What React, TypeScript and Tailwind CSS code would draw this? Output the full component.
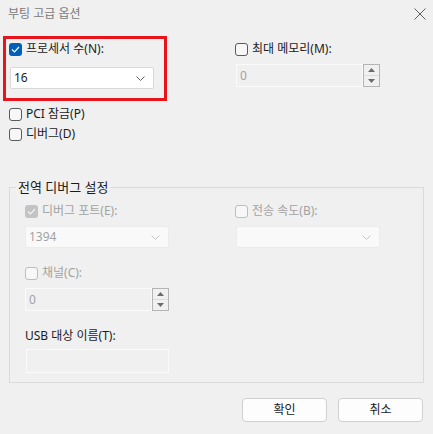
import React from 'react';

type CheckProps = { checked?: boolean; disabled?: boolean };

function CheckBox({ checked, disabled }: CheckProps) {
  if (checked && disabled) {
    return (
      <span className="flex h-[13px] w-[13px] shrink-0 items-center justify-center rounded-[3px] bg-[#c3c3c3]">
        <svg width="9" height="7" viewBox="0 0 9 7" fill="none">
          <path d="M1 3.5 L3.5 6 L8 1" stroke="#f4f4f4" strokeWidth="1.2" />
        </svg>
      </span>
    );
  }
  if (checked) {
    return (
      <span className="flex h-[13px] w-[13px] shrink-0 items-center justify-center rounded-[3px] bg-[#005fb8]">
        <svg width="9" height="7" viewBox="0 0 9 7" fill="none">
          <path d="M1 3.5 L3.5 6 L8 1" stroke="#ffffff" strokeWidth="1.2" />
        </svg>
      </span>
    );
  }
  return (
    <span
      className={
        disabled
          ? 'h-[13px] w-[13px] shrink-0 rounded-[3px] border border-[#bdbdbd] bg-[#f7f7f7]'
          : 'h-[13px] w-[13px] shrink-0 rounded-[3px] border border-[#5a5a5a] bg-[#f7f7f7]'
      }
    />
  );
}

function CheckRow({ label, checked, disabled }: CheckProps & { label: string }) {
  return (
    <div className="flex h-[16px] items-center gap-[4px]">
      <CheckBox checked={checked} disabled={disabled} />
      <span className={disabled ? 'text-[#a2a2a2]' : 'text-[#1b1b1b]'}>{label}</span>
    </div>
  );
}

function Chevron({ color }: { color: string }) {
  return (
    <svg width="9" height="5" viewBox="0 0 9 5" fill="none">
      <path d="M0.5 0.5 L4.5 4.5 L8.5 0.5" stroke={color} strokeWidth="1" />
    </svg>
  );
}

function Select({ value, disabled }: { value: string; disabled?: boolean }) {
  return (
    <div
      className={
        disabled
          ? 'flex h-[22px] w-[144px] items-center justify-between rounded-[2px] border border-[#ececec] bg-[#f9f9f9] pl-[3px] pr-[8px] text-[#a2a2a2]'
          : 'flex h-[22px] w-[144px] items-center justify-between rounded-[2px] border border-[#d9d9d9] bg-white pl-[3px] pr-[8px] text-[#1b1b1b]'
      }
    >
      <span>{value}</span>
      <Chevron color={disabled ? '#c4c4c4' : '#606060'} />
    </div>
  );
}

function SpinBox({ value }: { value: string }) {
  return (
    <div className="flex h-[23px] w-[144px] items-stretch">
      <div className="flex flex-1 items-center border border-[#fafafa] bg-[#f0f0f0] pl-[3px] text-[#a2a2a2]">
        {value}
      </div>
      <div className="flex w-[17px] flex-col border border-[#b4b4b4] bg-[#f0f0f0]">
        <div className="flex flex-1 items-center justify-center border-b border-[#dcdcdc]">
          <svg width="7" height="4" viewBox="0 0 7 4">
            <path d="M0 4 L3.5 0 L7 4 Z" fill="#6b6b6b" />
          </svg>
        </div>
        <div className="flex flex-1 items-center justify-center">
          <svg width="7" height="4" viewBox="0 0 7 4">
            <path d="M0 0 L3.5 4 L7 0 Z" fill="#6b6b6b" />
          </svg>
        </div>
      </div>
    </div>
  );
}

export default function App() {
  return (
    <div className="h-[434px] w-[433px] overflow-hidden bg-[#f0f0f0] font-['Noto_Sans','Noto_Sans_CJK_KR',sans-serif] text-[12px] leading-[16px]">
      {/* Title bar */}
      <div className="flex h-[28px] items-center justify-between pl-[8px] pr-[7px]">
        <span className="text-[#7a7a7a]">부팅 고급 옵션</span>
        <svg width="12" height="12" viewBox="0 0 12 12" fill="none">
          <path d="M0.5 0.5 L11.5 11.5 M11.5 0.5 L0.5 11.5" stroke="#5f5f5f" strokeWidth="1" />
        </svg>
      </div>

      {/* Top row */}
      <div className="mt-[8px] flex">
        <div className="ml-[3px] h-[65px] w-[164px] border-[3px] border-[#e8141c] pl-[3px] pt-[2px]">
          <CheckRow label="프로세서 수(N):" checked />
          <div className="ml-[1px] mt-[10px]">
            <Select value="16" />
          </div>
        </div>
        <div className="ml-[68px] pt-[5px]">
          <CheckRow label="최대 메모리(M):" />
          <div className="ml-[1px] mt-[7px]">
            <SpinBox value="0" />
          </div>
        </div>
      </div>

      <div className="ml-[9px] mt-[5px] flex flex-col gap-[4px]">
        <CheckRow label="PCI 잠금(P)" />
        <CheckRow label="디버그(D)" />
      </div>

      {/* Global debug settings */}
      <fieldset className="ml-[9px] mt-[37px] w-[415px] border border-[#dadada] pb-[9px] pl-[15px]">
        <legend className="-ml-[9px] px-[2px] text-[13px] text-[#1b1b1b]">전역 디버그 설정</legend>
        <div className="mt-[8px] grid grid-cols-[210px_1fr]">
          <div>
            <CheckRow label="디버그 포트(E):" checked disabled />
            <div className="mt-[7px]">
              <Select value="1394" disabled />
            </div>
          </div>
          <div>
            <CheckRow label="전송 속도(B):" disabled />
            <div className="ml-[1px] mt-[7px]">
              <Select value="" disabled />
            </div>
          </div>
        </div>
        <div className="mt-[17px]">
          <CheckRow label="채널(C):" disabled />
          <div className="mt-[7px]">
            <SpinBox value="0" />
          </div>
        </div>
        <div className="mt-[17px] text-[#1b1b1b]">USB 대상 이름(T):</div>
        <div className="ml-[1px] mt-[5px] h-[24px] w-[143px] border border-[#fafafa] bg-[#f0f0f0]" />
      </fieldset>

      {/* Buttons */}
      <div className="mt-[15px] flex justify-end gap-[11px] pr-[10px]">
        <button className="h-[24px] w-[85px] rounded-[4px] border border-[#d0d0d0] bg-[#fdfdfd] text-[#1b1b1b]">
          확인
        </button>
        <button className="h-[24px] w-[85px] rounded-[4px] border border-[#d0d0d0] bg-[#fdfdfd] text-[#1b1b1b]">
          취소
        </button>
      </div>
    </div>
  );
}
